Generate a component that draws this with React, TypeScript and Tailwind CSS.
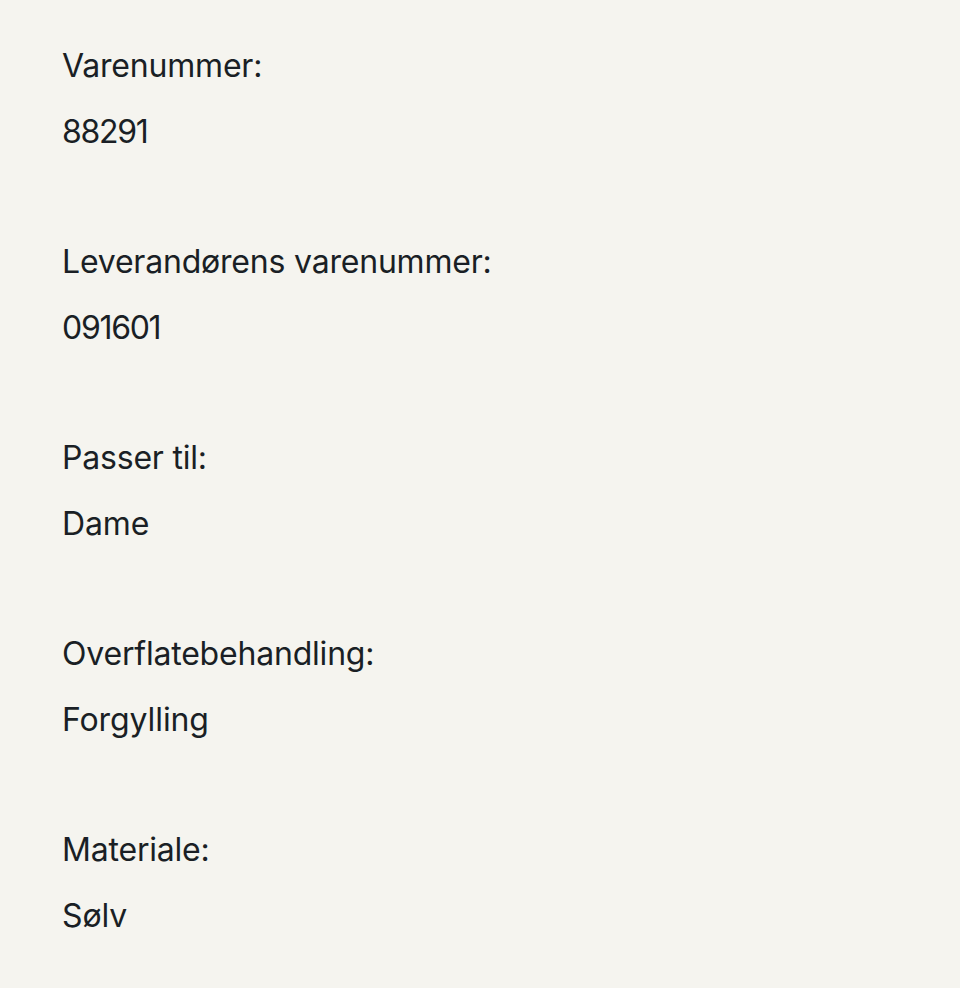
import React from "react";

const items: [string, string, boolean][] = [
  ["Varenummer:", "88291", true],
  ["Leverandørens varenummer:", "091601", true],
  ["Passer til:", "Dame", false],
  ["Overflatebehandling:", "Forgylling", false],
  ["Materiale:", "Sølv", false],
];

export default function App() {
  return (
    <div
      className="min-h-[988px] w-full bg-[#f5f4ef] pl-[62px] pt-[46px] text-[#1a1f25]"
      style={{ fontFamily: "Inter, 'Liberation Sans', sans-serif" }}
    >
      <div className="flex flex-col gap-[90px]">
        {items.map(([label, value, numeric]) => (
          <div key={label} className="flex flex-col gap-[26px]">
            <p className="text-[32px] leading-[40px] tracking-[-0.2px]">{label}</p>
            <p
              className={
                numeric
                  ? "text-[32px] leading-[40px] tracking-[-1.3px]"
                  : "text-[32px] leading-[40px] tracking-[-0.1px]"
              }
            >
              {value}
            </p>
          </div>
        ))}
      </div>
    </div>
  );
}
